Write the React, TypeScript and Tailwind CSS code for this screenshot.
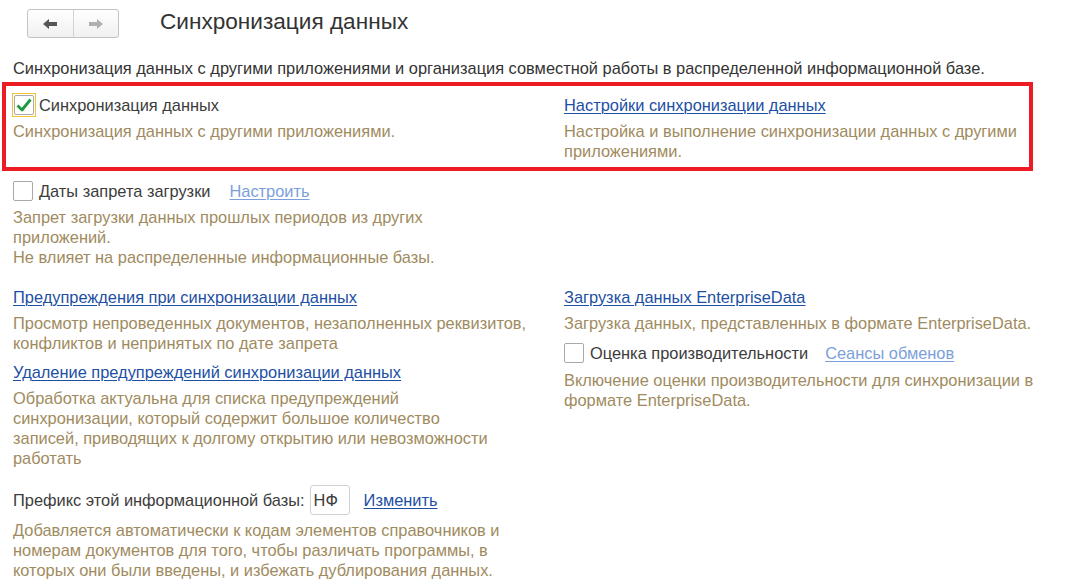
import React from 'react';

const desc = 'text-[#a08b60] leading-5';
const link = 'text-[#1d4fa4] underline underline-offset-2 decoration-1';
const lightLink = 'text-[#7b9fda] underline underline-offset-2 decoration-1';

function Arrow({ dir, color }: { dir: 'left' | 'right'; color: string }) {
  return (
    <svg width="16" height="12" viewBox="0 0 16 12" style={{ transform: dir === 'right' ? 'scaleX(-1)' : undefined }}>
      <path d="M1 6 L7 1 L7 4 L15 4 L15 8 L7 8 L7 11 Z" fill={color} />
    </svg>
  );
}

function CheckBox({ checked, focused }: { checked?: boolean; focused?: boolean }) {
  return (
    <span
      className={`flex items-center justify-center shrink-0 ${
        focused ? 'w-[24px] h-[24px] border border-[#f2c230] -ml-[1px]' : 'w-[20px] h-[20px]'
      }`}
    >
      <span className="w-[20px] h-[20px] border border-[#a9a9a9] rounded-[2px] bg-white flex items-center justify-center">
        {checked && (
          <svg width="16" height="14" viewBox="0 0 16 14">
            <path d="M1.5 7.5 L6 12 L14.5 1.5" fill="none" stroke="#1e9a3e" strokeWidth="2.8" strokeLinejoin="round" />
          </svg>
        )}
      </span>
    </span>
  );
}

export default function App() {
  return (
    <div className="min-h-screen bg-white text-[16.4px] text-[#3c3c3c]" style={{ fontFamily: '"Liberation Sans", Arial, sans-serif' }}>
      {/* header */}
      <div className="flex items-center pt-[9px] pl-[27px]">
        <div className="flex h-[29px] w-[92px] border border-[#c4c4c4] rounded-[3px] bg-gradient-to-b from-white to-[#f0f0f0]">
          <button className="flex-1 flex items-center justify-center border-r border-[#d4d4d4]">
            <Arrow dir="left" color="#555" />
          </button>
          <button className="flex-1 flex items-center justify-center">
            <Arrow dir="right" color="#b0b0b0" />
          </button>
        </div>
        <h1 className="ml-[41px] text-[22.6px] text-[#333] leading-none -mt-[3px]">Синхронизация данных</h1>
      </div>

      <p className="mt-[20px] pl-[13px] leading-5 text-[#333]">
        Синхронизация данных с другими приложениями и организация совместной работы в распределенной информационной базе.
      </p>

      {/* highlighted row */}
      <div className="mt-[4px] ml-[2px] w-[1031px] border-4 border-[#ed1c24] pl-[7px] pt-[9px] pb-[6px] grid grid-cols-[551px_1fr]">
        <div>
          <div className="flex items-center h-5 gap-[3px]">
            <CheckBox checked focused />
            <span>Синхронизация данных</span>
          </div>
          <p className={`${desc} mt-[6px]`}>Синхронизация данных с другими приложениями.</p>
        </div>
        <div>
          <div className="h-5 flex items-center">
            <a className={link}>Настройки синхронизации данных</a>
          </div>
          <p className={`${desc} mt-[6px] w-[465px]`}>Настройка и выполнение синхронизации данных с другими приложениями.</p>
        </div>
      </div>

      <div className="pl-[13px]">
        <div className="mt-[10px] flex items-center h-5">
          <CheckBox />
          <span className="ml-[6px]">Даты запрета загрузки</span>
          <a className={`${lightLink} ml-[19px]`}>Настроить</a>
        </div>
        <p className={`${desc} mt-[6px] w-[440px]`}>
          Запрет загрузки данных прошлых периодов из других приложений.
          <br />
          Не влияет на распределенные информационные базы.
        </p>

        <div className="mt-[20px] grid grid-cols-[551px_1fr]">
          <div>
            <div className="h-5 flex items-center">
              <a className={link}>Предупреждения при синхронизации данных</a>
            </div>
            <p className={`${desc} mt-[6px] w-[530px]`}>
              Просмотр непроведенных документов, незаполненных реквизитов, конфликтов и непринятых по дате запрета
            </p>

            <div className="h-5 flex items-center mt-[9px]">
              <a className={link}>Удаление предупреждений синхронизации данных</a>
            </div>
            <p className={`${desc} mt-[6px] w-[492px]`}>
              Обработка актуальна для списка предупреждений синхронизации, который содержит большое количество записей,
              приводящих к долгому открытию или невозможности работать
            </p>

            <div className="mt-[17px] flex items-center h-[30px]">
              <span>Префикс этой информационной базы:</span>
              <span className="ml-[5px] w-[40px] h-[30px] border border-[#d0d0d0] rounded-[3px] flex items-center pl-[3px]">НФ</span>
              <a className={`${link} ml-[14px]`}>Изменить</a>
            </div>
            <p className={`${desc} mt-[5px] w-[510px]`}>
              Добавляется автоматически к кодам элементов справочников и номерам документов для того, чтобы различать
              программы, в которых они были введены, и избежать дублирования данных.
            </p>
          </div>

          <div>
            <div className="h-5 flex items-center">
              <a className={link}>Загрузка данных EnterpriseData</a>
            </div>
            <p className={`${desc} mt-[6px]`}>Загрузка данных, представленных в формате EnterpriseData.</p>

            <div className="mt-[10px] flex items-center h-5">
              <CheckBox />
              <span className="ml-[6px]">Оценка производительности</span>
              <a className={`${lightLink} ml-[17px]`}>Сеансы обменов</a>
            </div>
            <p className={`${desc} mt-[7px] w-[500px]`}>
              Включение оценки производительности для синхронизации в формате EnterpriseData.
            </p>
          </div>
        </div>
      </div>
    </div>
  );
}
